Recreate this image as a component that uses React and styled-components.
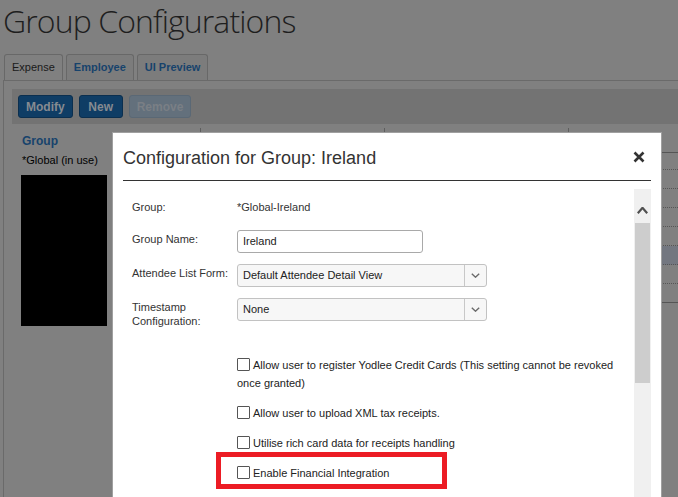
import React from 'react'
import styled, { createGlobalStyle } from 'styled-components'

// the page behind the dialog is drawn in its dimmed colours directly
const GlobalStyle = createGlobalStyle`
    html, body {
        margin: 0;
        overflow: hidden;
        background: #808080;
        font-family: "Liberation Sans", Arial, sans-serif;
    }
`

const Screen = styled.div`
    position: relative;
    height: 100vh;
    overflow: hidden;
    background: #808080;
`

const Page = styled.div`
    padding-left: 3px;
`

const PageTitle = styled.h1`
    margin: 0;
    font-family: "Open Sans", sans-serif;
    font-weight: 300;
    font-size: 32px;
    letter-spacing: -0.9px;
    line-height: 41px;
    color: #1e1e1e;
`

const TabRow = styled.div`
    display: flex;
    gap: 3px;
    height: 26px;
    margin-top: 13px;
    padding-left: 1px;
`

const Tab = styled.div`
    height: 25px;
    padding: 0 7px;
    border: 1px solid #686868;
    border-bottom: none;
    border-radius: 3px 3px 0 0;
    background: ${p => (p.$active ? '#808080' : '#7c7c7c')};
    color: ${p => (p.$active ? '#1a1a1a' : '#17436c')};
    font-size: 11px;
    font-weight: ${p => (p.$active ? 'normal' : 'bold')};
    line-height: 25px;
`

const Panel = styled.div`
    height: 420px;
    border-top: 1px solid #6a6a6a;
    border-left: 1px solid #6a6a6a;
    padding: 8px 0 0 8px;
`

const Toolbar = styled.div`
    display: flex;
    align-items: center;
    gap: 6px;
    height: 35px;
    padding: 0 6px;
    background: #737373;
`

const Button = styled.button`
    height: 23px;
    min-width: 44px;
    padding: 0 7px;
    border: 1px solid ${p => (p.disabled ? '#5a6875' : '#0b2f4f')};
    border-radius: 3px;
    background: ${p => (p.disabled ? '#63707c' : '#0f3d65')};
    color: ${p => (p.disabled ? '#7a7f85' : '#868b91')};
    font-family: "Liberation Sans", Arial, sans-serif;
    font-size: 12px;
    font-weight: bold;
`

const Table = styled.div`
    position: relative;
    margin-top: 4px;
`

const Row = styled.div`
    display: grid;
    grid-template-columns: 188px 184px 184px 1fr;
    height: ${p => (p.$head ? '23px' : '19px')};
`

const Cell = styled.div`
    padding-left: 10px;
    font-size: ${p => (p.$head ? '12px' : '11px')};
    font-weight: ${p => (p.$head ? 'bold' : 'normal')};
    color: ${p => (p.$head ? '#17436c' : '#000')};
    line-height: ${p => (p.$head ? '23px' : '19px')};
    padding-top: ${p => (p.$head ? '2px' : '0')};
    white-space: nowrap;
    background: ${p => (p.$selected ? '#737780' : 'transparent')};
    border-bottom: ${p => (p.$line ? `1px ${p.$line} #555` : 'none')};
    border-left: ${p => (p.$sep ? '1px solid #5e5e5e' : 'none')};
`

const Redaction = styled.div`
    position: absolute;
    left: 9px;
    top: 47px;
    width: 86px;
    height: 151px;
    background: #000;
`

const Dialog = styled.div`
    position: absolute;
    left: 112px;
    top: 132px;
    z-index: 20;
    width: 548px;
    height: 420px;
    border: 1px solid #a0a0a0;
    background: #fff;
`

const DialogHeader = styled.div`
    display: flex;
    align-items: center;
    justify-content: space-between;
    height: 47px;
    margin: 0 10px;
    padding-right: 6px;
    border-bottom: 1px solid #333;
`

const DialogTitle = styled.h2`
    margin: 0;
    padding-top: 3px;
    font-size: 18px;
    font-weight: normal;
    color: #333;
`

const Close = styled.span`
    display: flex;
    padding-top: 1px;
`

const DialogBody = styled.div`
    display: flex;
    margin: 0 10px;
    padding-top: 8px;
`

const Content = styled.div`
    flex: 1;
    padding: 7px 0 0 9px;
`

const Form = styled.div`
    display: grid;
    grid-template-columns: 105px 1fr;
    grid-auto-rows: minmax(23px, auto);
    row-gap: 11px;
`

const Label = styled.div`
    padding-top: ${p => p.$pad || '2px'};
    font-size: 11px;
    line-height: 14px;
    color: #333;
`

const TextInput = styled.div`
    box-sizing: border-box;
    width: 186px;
    height: 23px;
    padding: 0 5px;
    border: 1px solid #a9a9a9;
    border-radius: 3px;
    font-size: 11px;
    line-height: 21px;
    color: #222;
`

const Select = styled.div`
    box-sizing: border-box;
    display: flex;
    width: 250px;
    height: 23px;
    border: 1px solid #c2c2c2;
    border-radius: 3px;
    background: #f7f7f7;
    font-size: 11px;
    line-height: 21px;
    color: #222;
`

const SelectText = styled.span`
    flex: 1;
    padding-left: 5px;
`

const SelectButton = styled.span`
    display: flex;
    align-items: center;
    justify-content: center;
    width: 21px;
    border-left: 1px solid #c8c8c8;
`

const Options = styled.div`
    margin-top: 28px;
    padding-left: 105px;
`

const Option = styled.div`
    position: relative;
    margin-bottom: 12px;
    font-size: 11px;
    line-height: 18px;
    color: #222;

    &::after {
        content: '';
        display: ${p => (p.$highlight ? 'block' : 'none')};
        position: absolute;
        left: -21px;
        top: -12px;
        width: 231px;
        height: 37px;
        box-sizing: border-box;
        border: 5px solid #ec1c24;
    }
`

const Box = styled.span`
    display: inline-block;
    box-sizing: border-box;
    width: 13px;
    height: 13px;
    margin-right: 3px;
    vertical-align: -2px;
    border: 1px solid #555;
    border-radius: 1px;
    background: #fff;
`

const Scrollbar = styled.div`
    width: 17px;
    height: 320px;
    background: #f0f0f0;
`

const ScrollArrow = styled.div`
    display: flex;
    justify-content: center;
    height: 34px;
    padding-top: 18px;
    box-sizing: border-box;
`

const ScrollThumb = styled.div`
    height: 160px;
    margin: 0 1px;
    background: #cdcdcd;
`

const Chevron = ({ up, color = '#6a6a6a', w = 9, h = 5, stroke = 1.4 }) => (
    <svg width={w} height={h} viewBox={`0 0 ${w} ${h}`}>
        <polyline
            points={up ? `0.8,${h - 0.8} ${w / 2},0.8 ${w - 0.8},${h - 0.8}` : `0.8,0.8 ${w / 2},${h - 0.8} ${w - 0.8},0.8`}
            fill="none"
            stroke={color}
            strokeWidth={stroke}
        />
    </svg>
)

const rows = [
    { name: '*Global (in use)' },
    {}, {}, {}, {},
    { selected: true },
    {}, { last: true },
]

const App = () => {
    return (
        <Screen>
            <GlobalStyle />
            <Page>
                <PageTitle>Group Configurations</PageTitle>
                <TabRow>
                    <Tab $active>Expense</Tab>
                    <Tab>Employee</Tab>
                    <Tab>UI Preview</Tab>
                </TabRow>
                <Panel>
                    <Toolbar>
                        <Button>Modify</Button>
                        <Button>New</Button>
                        <Button disabled>Remove</Button>
                    </Toolbar>
                    <Table>
                        <Row $head>
                            <Cell $head>Group</Cell>
                            <Cell $head $sep $line="solid" />
                            <Cell $head $sep $line="solid" />
                            <Cell $head $sep $line="solid" />
                        </Row>
                        {rows.map((r, i) => (
                            <Row key={i}>
                                <Cell>{r.name}</Cell>
                                {[0, 1, 2].map(c => (
                                    <Cell key={c} $selected={r.selected} $line={r.last ? 'solid' : 'dotted'} />
                                ))}
                            </Row>
                        ))}
                        <Redaction />
                    </Table>
                </Panel>
            </Page>
            <Dialog>
                <DialogHeader>
                    <DialogTitle>Configuration for Group: Ireland</DialogTitle>
                    <Close>
                        <svg width="12" height="12" viewBox="0 0 12 12">
                            <path d="M1.5 1.5 L10.5 10.5 M10.5 1.5 L1.5 10.5" stroke="#333" strokeWidth="2.6" />
                        </svg>
                    </Close>
                </DialogHeader>
                <DialogBody>
                    <Content>
                        <Form>
                            <Label $pad="4px">Group:</Label>
                            <Label $pad="4px">*Global-Ireland</Label>
                            <Label>Group Name:</Label>
                            <TextInput>Ireland</TextInput>
                            <Label>Attendee List Form:</Label>
                            <Select>
                                <SelectText>Default Attendee Detail View</SelectText>
                                <SelectButton><Chevron /></SelectButton>
                            </Select>
                            <Label>Timestamp<br />Configuration:</Label>
                            <Select>
                                <SelectText>None</SelectText>
                                <SelectButton><Chevron /></SelectButton>
                            </Select>
                        </Form>
                        <Options>
                            <Option><Box />Allow user to register Yodlee Credit Cards (This setting cannot be revoked once granted)</Option>
                            <Option><Box />Allow user to upload XML tax receipts.</Option>
                            <Option><Box />Utilise rich card data for receipts handling</Option>
                            <Option $highlight><Box />Enable Financial Integration</Option>
                        </Options>
                    </Content>
                    <Scrollbar>
                        <ScrollArrow><Chevron up color="#505050" w={11} h={7} stroke={2.2} /></ScrollArrow>
                        <ScrollThumb />
                    </Scrollbar>
                </DialogBody>
            </Dialog>
        </Screen>
    )
}

export default App
